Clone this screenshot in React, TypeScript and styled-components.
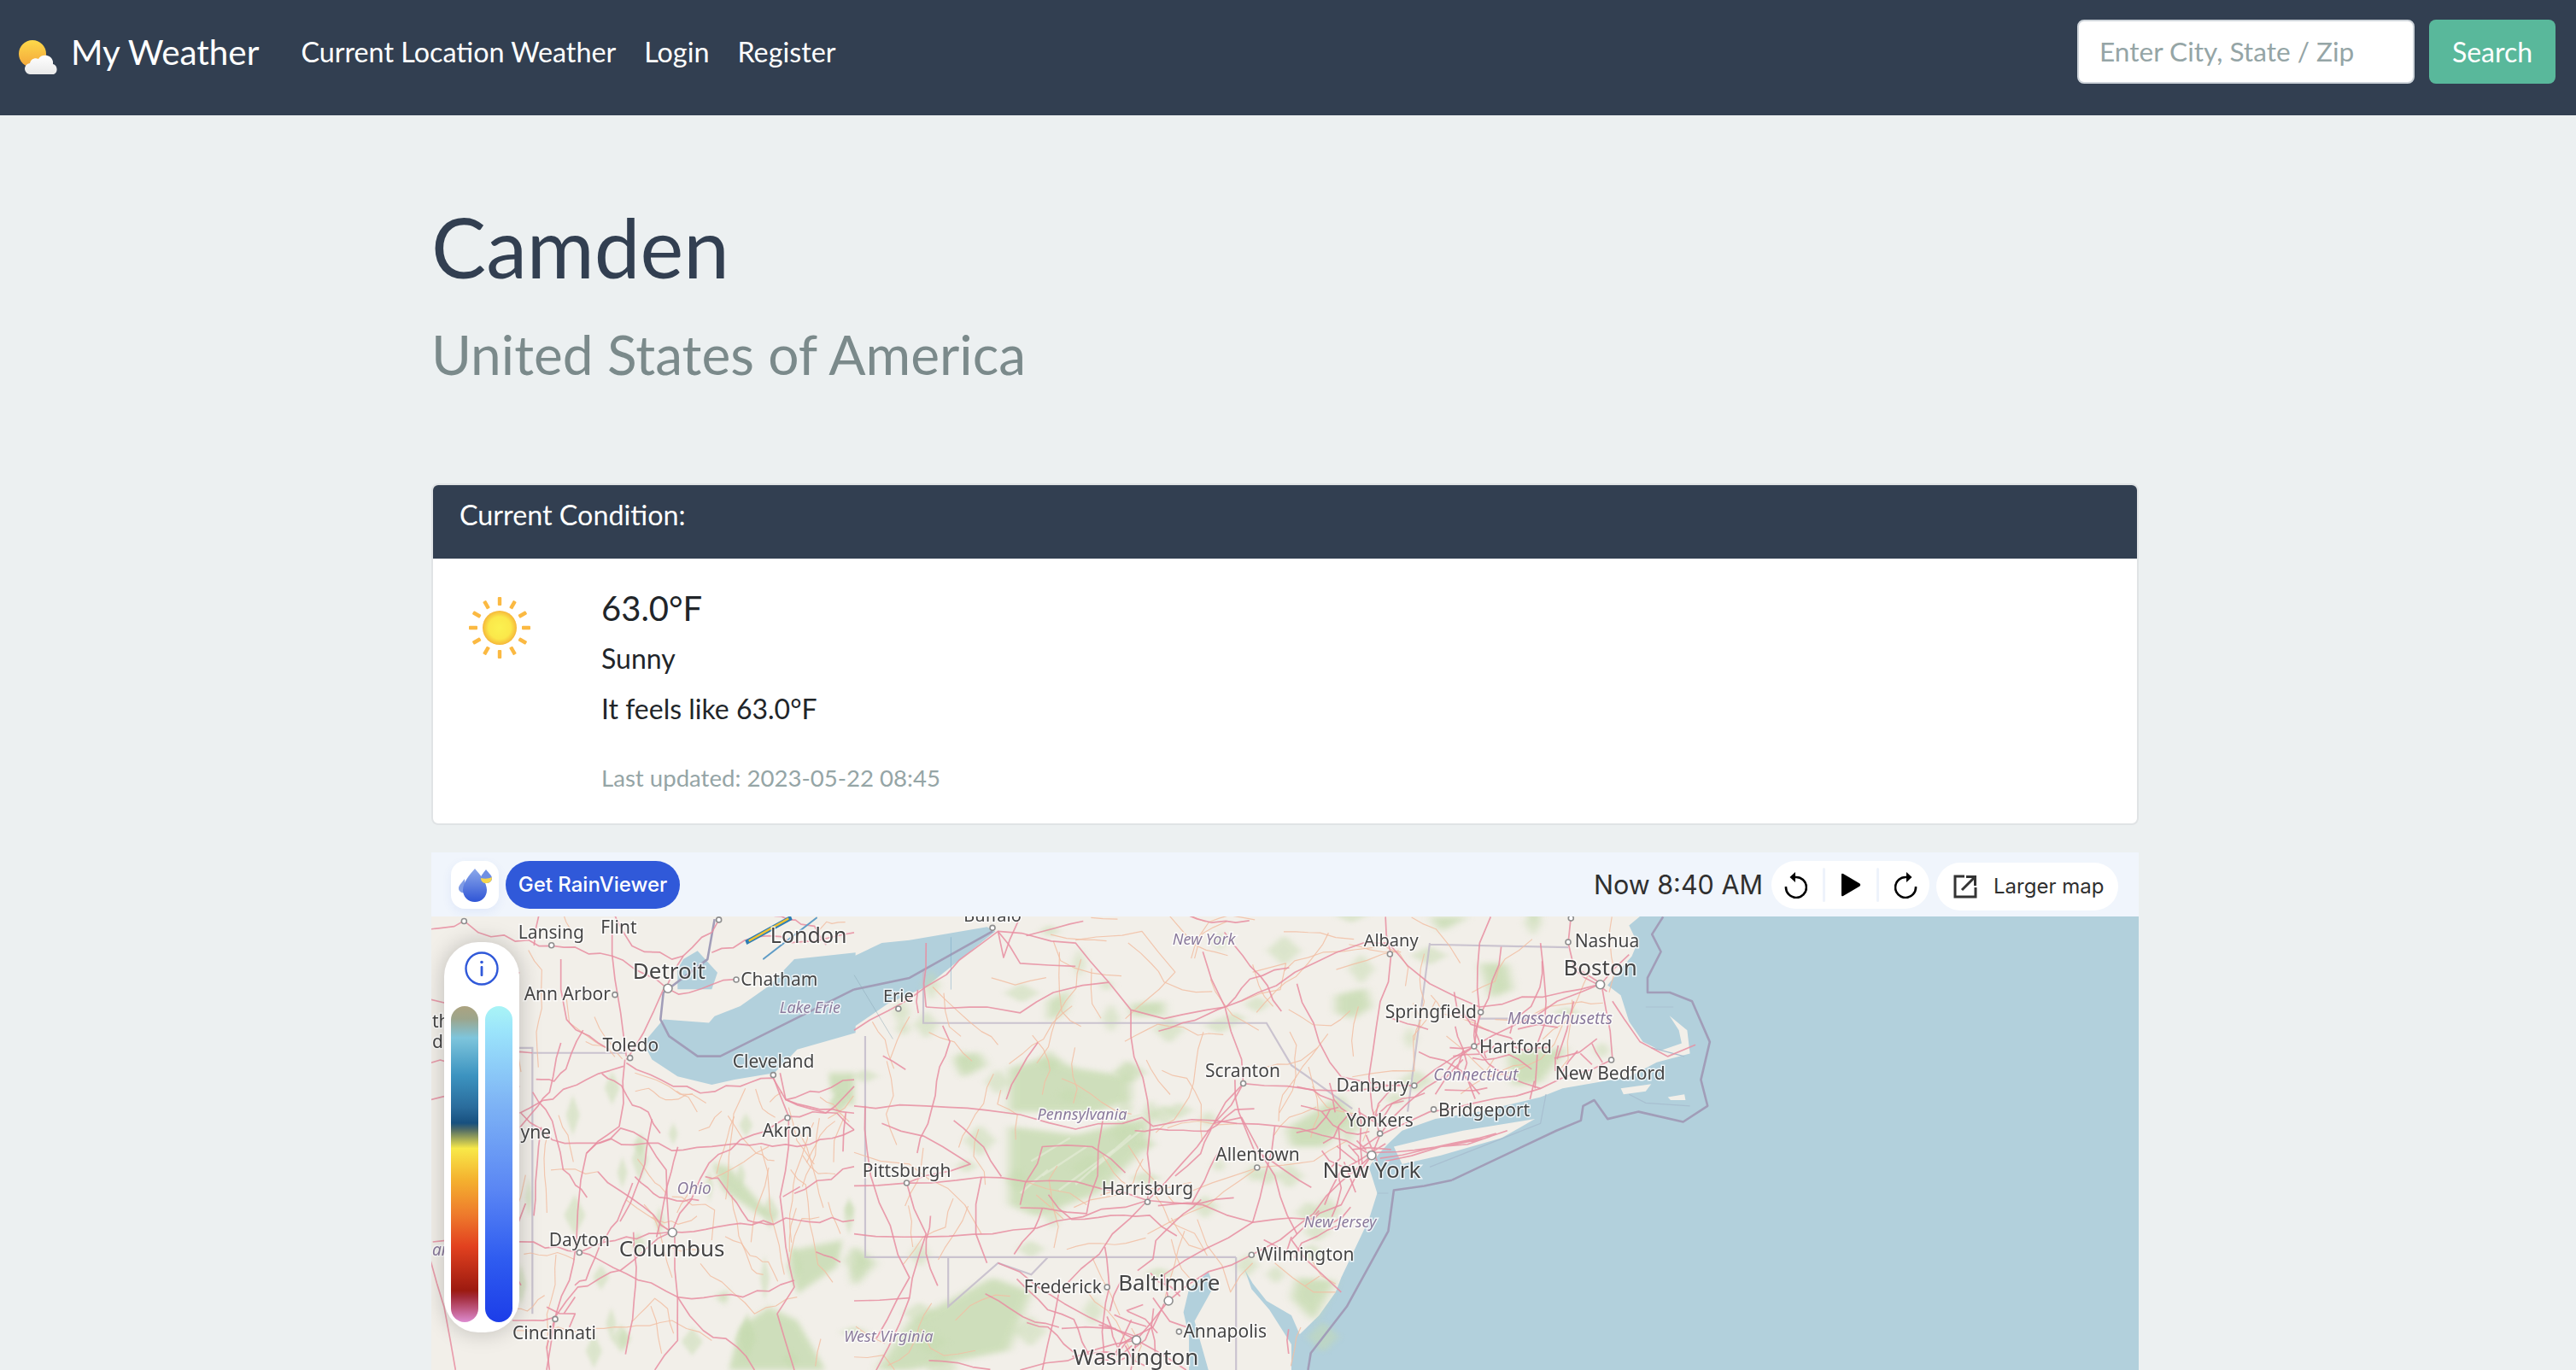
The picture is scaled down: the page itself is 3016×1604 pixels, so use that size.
import React from "react";
import styled, { createGlobalStyle } from "styled-components";

const Global = createGlobalStyle`
  html, body { margin: 0; padding: 0; height: 1604px; overflow: hidden; background: #ecf0f1; }
  body { font-family: Lato, "Liberation Sans", sans-serif; color: #212529; }
  * { box-sizing: border-box; }
`;

const NavBar = styled.nav`
  height: 135px;
  background: #323f51;
  display: flex;
  align-items: center;
  padding: 0 24px 15px 22px;
`;
const Brand = styled.a`
  display: flex;
  align-items: center;
  color: #fff;
  font-size: 40.4px;
  margin-right: 49px;
  gap: 13px;
`;
const NavLinks = styled.div`
  display: flex;
  gap: 33px;
  flex: 1;
`;
const NavLink = styled.a`
  color: #fff;
  font-size: 32.3px;
`;
const SearchForm = styled.form`
  display: flex;
  gap: 17px;
`;
const SearchInput = styled.input`
  width: 395px;
  height: 75px;
  border: 2px solid #ced4da;
  border-radius: 8px;
  background: #fff;
  padding: 0 24px;
  font: 31.6px Lato, sans-serif;
  &::placeholder { color: #95a5a6; opacity: 1; }
`;
const SearchButton = styled.button`
  width: 148px;
  height: 75px;
  padding: 0;
  border: 0;
  border-radius: 8px;
  background: #59b89b;
  color: #fff;
  font: 32px Lato, sans-serif;
`;

const Main = styled.main`
  margin-left: 505px;
  width: 1999px;
`;
const Title = styled.h1`
  margin: 0;
  padding-top: 94px;
  font-weight: 400;
  font-size: 96px;
  line-height: 120px;
  color: #323f51;
`;
const Subtitle = styled.h2`
  margin: 0;
  padding-top: 27px;
  font-weight: 400;
  font-size: 64px;
  line-height: 78px;
  color: #7b8a8b;
`;
const Card = styled.section`
  margin-top: 112px;
  height: 400px;
  background: #fff;
  border: 2px solid #e0e3e5;
  border-radius: 8px;
  overflow: hidden;
`;
const CardHeader = styled.header`
  height: 88px;
  margin: -2px -2px 0;
  background: #323f51;
  color: #fff;
  font-size: 32.3px;
  line-height: 36px;
  padding: 19px 33px 0;
`;
const CardBody = styled.div`
  display: flex;
  padding: 45px 0 0 42px;
`;
const IconCell = styled.div`
  width: 155px;
  flex: none;
`;
const Temp = styled.div`
  font-size: 40px;
  line-height: 48px;
  margin-top: -11px;
`;
const Line = styled.div`
  font-size: 32px;
  line-height: 36px;
  margin-top: 23px;
  &:nth-of-type(2) { margin-top: 17px; }
`;
const Updated = styled.div`
  font-size: 27.6px;
  line-height: 32px;
  margin-top: 47px;
  color: #95a5a6;
`;

const Frame = styled.section`
  margin-top: 32px;
  position: relative;
`;
const FrameBar = styled.div`
  height: 75px;
  background: #f0f5fc;
  display: flex;
  align-items: center;
  padding: 0 24px 0 23px;
  font-family: Inter, sans-serif;
`;
const LogoTile = styled.div`
  width: 56px;
  height: 56px;
  border-radius: 16px;
  background: #fff;
  box-shadow: 0 4px 12px rgba(48, 89, 217, 0.08);
  display: flex;
  align-items: center;
  justify-content: center;
  margin-right: 8px;
`;
const GetButton = styled.a`
  width: 204px;
  height: 56px;
  border-radius: 28px;
  background: #3059d9;
  color: #fff;
  font-size: 24px;
  font-weight: 500;
  display: flex;
  align-items: center;
  justify-content: center;
`;
const Spacer = styled.div`
  flex: 1;
`;
const TimeLabel = styled.span`
  font-size: 30.5px;
  color: #2f2f2f;
  margin-right: 10px;
`;
const Controls = styled.div`
  width: 185px;
  height: 56px;
  border-radius: 28px;
  background: #fff;
  display: flex;
  align-items: center;
  justify-content: space-between;
  padding: 0 13px 0 14px;
  margin-right: 8px;
`;
const Divider = styled.span`
  width: 3px;
  height: 40px;
  border-radius: 2px;
  background: #eef3fb;
`;
const LargerMap = styled.a`
  width: 213px;
  height: 56px;
  margin-top: 4px;
  border-radius: 28px;
  background: #fff;
  color: #2f2f2f;
  font-size: 24px;
  display: flex;
  align-items: center;
  padding-left: 20px;
  gap: 19px;
`;
const MapView = styled.div`
  height: 531px;
  overflow: hidden;
  background: #b2d0dc;
  position: relative;
`;
const MapDrawing = styled.svg`
  display: block;
  width: 1999px;
  height: 531px;
  filter: blur(0.5px);
`;
const Panel = styled.div`
  position: absolute;
  left: 15px;
  top: 30px;
  width: 88px;
  height: 457px;
  border-radius: 40px;
  background: #fff;
  box-shadow: 0 0 26px rgba(0, 0, 0, 0.22);
  display: flex;
  flex-direction: column;
  align-items: center;
`;
const InfoWrap = styled.div`
  height: 75px;
  padding-top: 11px;
`;
const Bars = styled.div`
  display: flex;
  gap: 8px;
`;
const Bar = styled.div<{ $kind: "rain" | "snow" }>`
  width: 32px;
  height: 370px;
  border-radius: 16px;
  background: ${(p) =>
    p.$kind === "rain"
      ? "linear-gradient(180deg,#aca380 0%,#9ca58c 4%,#7ec5dc 10%,#3c93c0 22%,#2a6c9c 32%,#17507f 37%,#4e6a66 39%,#f8e948 45%,#f4b12f 55%,#ee7a2c 66%,#e2411f 76%,#9c1a10 90%,#a22a38 92%,#dd8bd0 100%)"
      : "linear-gradient(180deg,#a9f4f6 0%,#9be4fb 8%,#7fb5f5 30%,#5a86f4 58%,#2f5cf0 80%,#1c3de8 100%)"};
`;

const Land = styled.path`fill: #f2efe9;`;
const Water = styled.path`fill: #b2d0dc;`;
const Forest = styled.path<{ $faint?: boolean }>`
  fill: #c6dbb0;
  opacity: ${(p) => (p.$faint ? 0.5 : 0.8)};
  filter: blur(${(p) => (p.$faint ? 7 : 9)}px);
`;
const Ridge = styled.path`fill: none; stroke: #e4ebd6; stroke-width: 2.5; opacity: 0.7; vector-effect: non-scaling-stroke;`;
const Road = styled.path`fill: none; stroke: #e88fa2; stroke-width: 1.7; opacity: 0.85; vector-effect: non-scaling-stroke; stroke-linejoin: round;`;
const MinorRoad = styled.path`fill: none; stroke: #f2bfa4; stroke-width: 1.2; opacity: 0.85; vector-effect: non-scaling-stroke; stroke-linejoin: round;`;
const Border = styled.path`fill: none; stroke: #c4bccb; stroke-width: 2.2; opacity: 0.85; vector-effect: non-scaling-stroke;`;
const SeaBorder = styled.path`fill: none; stroke: #a19db8; stroke-width: 2.6; vector-effect: non-scaling-stroke; stroke-linejoin: round;`;
const NearShore = styled.path`fill: none; stroke: #a8bfd0; stroke-width: 1.2; vector-effect: non-scaling-stroke;`;
const Place = styled.text<{ $size: number; $state?: boolean }>`
  font-family: "Noto Sans", sans-serif;
  font-size: ${(p) => p.$size}px;
  font-style: ${(p) => (p.$state ? "italic" : "normal")};
  fill: ${(p) => (p.$state ? "#8a7a9c" : "#454545")};
  stroke: rgba(255, 255, 255, 0.75);
  stroke-width: 3px;
  paint-order: stroke;
`;
const Town = styled.circle`
  fill: #fff;
  stroke: #8e8e8e;
  stroke-width: 1.6;
`;

const z4 = (x: number, y: number) => [500 + x / 3, 990 + y / 2.554];
const z6 = (x: number, y: number) => [1000 + x / 1.543, 1070 + y / 2.936];

function makeRng(seed: number) {
  let s = seed;
  return () => {
    s = (s * 16807) % 2147483647;
    return s / 2147483647;
  };
}

// Breaks each straight stretch of a road into small irregular ones.
function wiggle(d: string, seed: number, amp = 5, step = 42) {
  const rnd = makeRng(seed * 97 + 13);
  let out = "";
  let px = 0;
  let py = 0;
  for (const m of d.matchAll(/([ML])\s*(-?\d+)\s+(-?\d+)/g)) {
    const x = +m[2];
    const y = +m[3];
    if (m[1] === "M") {
      out += `M${x} ${y}`;
    } else {
      const n = Math.max(1, Math.round(Math.hypot(x - px, (y - py) * 0.5) / step));
      for (let i = 1; i < n; i++) {
        const t = i / n;
        out += `L${(px + (x - px) * t + (rnd() - 0.5) * amp * 2).toFixed(1)} ${(py + (y - py) * t + (rnd() - 0.5) * amp * 4).toFixed(1)}`;
      }
      out += `L${x} ${y}`;
    }
    px = x;
    py = y;
  }
  return out;
}

function network(
  seed: number,
  count: number,
  box: [number, number, number, number],
  reach: number,
  onLand: (x: number, y: number) => boolean,
) {
  const rnd = makeRng(seed);
  const list: string[] = [];
  let guard = 0;
  while (list.length < count && guard++ < count * 40) {
    let x = box[0] + rnd() * (box[2] - box[0]);
    let y = box[1] + rnd() * (box[3] - box[1]);
    if (!onLand(x, y)) continue;
    let d = `M${x | 0} ${y | 0}`;
    let a = rnd() * Math.PI * 2;
    const legs = 2 + Math.floor(rnd() * 3);
    for (let i = 0; i < legs; i++) {
      a += (rnd() - 0.5) * 1.4;
      const nx = x + Math.cos(a) * reach * (0.5 + rnd());
      const ny = y + Math.sin(a) * reach * 1.8 * (0.5 + rnd());
      if (!onLand(nx, ny)) break;
      d += `L${nx | 0} ${ny | 0}`;
      x = nx;
      y = ny;
    }
    list.push(wiggle(d, seed + list.length, 3, 25));
  }
  return list;
}

function blobs(seed: number, count: number, box: [number, number, number, number], size: number, onLand: (x: number, y: number) => boolean) {
  const rnd = makeRng(seed);
  const list: string[] = [];
  let guard = 0;
  while (list.length < count && guard++ < count * 40) {
    const x = box[0] + rnd() * (box[2] - box[0]);
    const y = box[1] + rnd() * (box[3] - box[1]);
    if (!onLand(x, y)) continue;
    const w = size * (0.5 + rnd());
    const h = size * 1.8 * (0.5 + rnd());
    list.push(`M${x | 0} ${(y - h) | 0} L${(x + w) | 0} ${y | 0} L${x | 0} ${(y + h) | 0} L${(x - w) | 0} ${y | 0} Z`);
  }
  return list;
}

const land6 = (x: number, y: number) => {
  if (y < 0 || y > 1568 || x < 0) return false;
  if (x < 270 && y < 400 - x * 1.25) return false;
  if (y < 560) return x < 1380;
  if (y < 640) return x < 1240;
  if (y < 730) return x < 1030;
  if (y < 830) return x < 960;
  if (y > 1330 && x > 560 && x < 660) return false;
  if (y > 1250 && x > 700 && x < 770) return false;
  return x < 925 - (y - 830) * 0.12;
};
const land4 = (x: number, y: number) => {
  if (y < 0 || y > 1568) return false;
  if (x > 330 && x < 1500 && y > 310 && y < 720 && x > 760) return false;
  return x > 330 || y < 100 ? x < 1500 : true;
};

type Lbl = [string, number, number, number, boolean?, ("end" | "middle" | "start")?];

const labels4: Lbl[] = [
  ["Lansing", 436, 278, 21],
  ["Flint", 673, 262, 21],
  ["London", 1340, 290, 25],
  ["Detroit", 850, 398, 26],
  ["Chatham", 1237, 420, 21],
  ["Ann Arbor", 493, 462, 21],
  ["Lake Erie", 1345, 500, 18, true],
  ["Toledo", 715, 615, 21],
  ["Cleveland", 1217, 665, 21],
  ["Akron", 1265, 870, 21],
  ["yne", 435, 875, 21, false, "end"],
  ["Ohio", 938, 1043, 19, true],
  ["Dayton", 535, 1197, 21],
  ["Columbus", 860, 1228, 26],
  ["Cincinnati", 447, 1475, 21],
  ["an", 18, 1225, 19, true, "start"],
  ["th", 18, 545, 21, false, "start"],
  ["d", 18, 605, 21, false, "start"],
];
const labels6: Lbl[] = [
  ["Buffalo", 250, 25, 20],
  ["New York", 632, 105, 18, true],
  ["Albany", 970, 112, 20],
  ["Nashua", 1360, 115, 21],
  ["Boston", 1348, 212, 26],
  ["Erie", 80, 302, 20],
  ["Springfield", 1042, 358, 21],
  ["Massachusetts", 1275, 378, 19, true],
  ["Hartford", 1195, 480, 21],
  ["Scranton", 702, 560, 21],
  ["Connecticut", 1123, 573, 19, true],
  ["New Bedford", 1366, 570, 21],
  ["Danbury", 937, 612, 21],
  ["Pennsylvania", 412, 707, 18, true],
  ["Bridgeport", 1138, 695, 21],
  ["Yonkers", 950, 730, 21],
  ["Allentown", 729, 848, 21],
  ["New York", 935, 908, 26],
  ["Pittsburgh", 95, 905, 21],
  ["Harrisburg", 530, 965, 21],
  ["New Jersey", 878, 1077, 18, true],
  ["Wilmington", 815, 1192, 21],
  ["Frederick", 377, 1305, 21],
  ["Baltimore", 569, 1295, 26],
  ["Annapolis", 670, 1455, 21],
  ["West Virginia", 62, 1470, 18, true],
  ["Washington", 509, 1550, 26],
];
const towns6: [number, number, number][] = [
  [250, 48, 3], [968, 138, 3], [1290, 97, 3], [1348, 243, 5], [80, 326, 3], [1132, 338, 3],
  [1120, 455, 3], [703, 583, 3], [1012, 590, 3], [1368, 502, 3], [1047, 672, 3], [950, 755, 3],
  [935, 830, 5], [728, 872, 3], [95, 925, 3], [530, 990, 3], [718, 1172, 3], [457, 1283, 3],
  [568, 1330, 5], [587, 1436, 3], [510, 1465, 5], [1295, 15, 3],
];
const towns4: [number, number, number][] = [
  [130, 226, 3], [437, 298, 3], [846, 427, 5], [1086, 401, 3], [660, 446, 3], [713, 635, 3],
  [1216, 686, 3], [1266, 814, 3], [862, 1157, 5], [535, 1217, 3], [450, 1416, 3], [1025, 222, 3],
];

const roads4 = [
  "M695 640 L690 770 L675 840 L560 920 L540 1000 L525 1180 L500 1300 L450 1410 L420 1568",
  "M12 650 L130 640 L370 620 M700 650 L820 700 L960 740 L1100 720 L1215 695 L1260 760 L1500 800",
  "M700 640 L760 560 L830 430 L840 425",
  "M12 250 L130 225 L180 260 L440 300 L650 330 L730 370 L840 425",
  "M840 425 L900 330 L1000 260 L1025 222",
  "M650 260 L660 400 L680 500 L700 630",
  "M1215 690 L1270 810 L1270 900 L1240 1050 L1260 1200 L1290 1320 L1230 1400 L1290 1568",
  "M860 1155 L1100 1130 L1300 1120 L1500 1120",
  "M860 1155 L700 1170 L540 1215 L330 1185 L20 1185",
  "M860 1155 L990 950 L1100 880 L1270 810",
  "M860 1155 L680 1270 L530 1320 L450 1410",
  "M870 1170 L880 1350 L970 1450 L1090 1500 L1150 1568",
  "M330 800 L440 880 L770 890 L900 910 L1000 900 L1300 900 L1500 850",
  "M560 920 L680 845 L770 880 L840 970 L850 1150",
  "M535 1215 L700 1280 L880 1350 L1110 1350 L1290 1300",
  "M600 975 L760 1080 L860 1155",
  "M325 800 L560 700 L690 660",
  "M1000 320 L1200 270 L1280 290 L1500 260",
  "M1086 400 L920 440 L850 430",
  "M430 1568 L420 1500 L450 1410 L300 1420",
  "M1240 680 L1260 760 L1500 700 M1260 760 L1440 800 L1500 850",
  "M660 210 L720 300 L860 340 L900 330",
  "M320 1185 L100 1200 M12 1240 L60 1380 L100 1568",
  "M470 340 L470 430 L490 520 L640 610",
  "M1290 1040 L1500 960 M1250 1050 L1310 1020",
  "M800 1568 L880 1480 L880 1350",
  "M12 460 L60 470 L325 380 M12 760 L60 750 L325 720",
  "M480 1400 L520 1350 M420 1380 L520 1400 L500 1440",
  "M1270 810 L1400 800 L1500 720",
];
const minor4 = [
  "M490 460 L500 530 L640 610",
  "M435 970 L600 975 M990 1000 L1200 900",
  "M860 1050 L1010 1090 L1000 1180 M700 1060 L860 1160",
  "M960 1250 L1150 1400 L1300 1350",
  "M300 1450 L700 1440 L860 1420 L1000 1480",
  "M730 680 L850 720 L980 770",
];
const roads6 = [
  "M0 400 L130 250 L260 60 L270 150 L300 10",
  "M970 100 L920 100 L830 170 L730 270 L670 320 L560 360 L500 330 L460 235 L360 270 L300 340 L240 320 L130 320",
  "M260 60 L400 100 L460 235 M630 130 L670 320",
  "M0 660 L130 660 L240 675 L300 690 L400 740 L520 700 L540 730 L650 710 L770 730 L890 780 L935 830",
  "M0 935 L95 925 L230 905 L310 920 L400 920 L530 985 L630 1000 L720 1060 L830 1050",
  "M500 330 L500 420 L530 640 L535 730 L530 985",
  "M670 320 L700 500 L703 583 L650 720 L620 800 L530 985 L410 1220 L370 1300",
  "M935 830 L880 920 L830 1030 L770 1120 L718 1172 L640 1230 L568 1330 L510 1465",
  "M935 830 L950 760 L1040 680 L1240 600 L1370 500 L1350 240",
  "M950 760 L1000 650 L1120 455 L1270 300 L1350 240",
  "M1120 455 L1130 340 L1130 100 L1150 10",
  "M950 760 L930 560 L970 140 L960 10",
  "M970 110 L1040 240 L1130 320 L1280 270 L1350 240",
  "M703 583 L830 605 L1012 590 L1120 455",
  "M1350 240 L1300 180 L1290 100 L1295 10",
  "M1370 300 L1420 440 L1470 490 L1520 450",
  "M0 1100 L130 1110 L250 1100 L330 1080 L530 985",
  "M20 660 L30 900 L100 1250 L40 1460",
  "M510 1465 L380 1340 L330 1280 L260 1200",
  "M510 1465 L600 1568 M510 1465 L300 1568 M510 1465 L500 1568",
  "M950 840 L1130 770 L1160 755 M960 850 L1060 800 L1150 765 M940 820 L1090 790 L1180 745",
  "M95 925 L130 1100 L100 1320 L40 1568",
  "M95 925 L210 860 L160 800 L50 720",
  "M300 1000 L340 800 L430 800 L490 890",
  "M790 1120 L880 1300 M935 830 L880 1000 L840 1030 L830 1050",
  "M1350 240 L1400 140 M1240 100 L1250 300 L1230 600",
  "M800 240 L840 440 L880 560 L1012 590",
  "M700 590 L650 720 L700 700 L760 900 L800 1100",
  "M1120 455 L1180 560 L1240 600 M1300 300 L1270 500",
  "M100 1320 L0 1330 M370 1300 L340 1568",
  "M568 1330 L560 1240 L720 1060 L760 730",
  "M920 800 L950 760 M910 850 L960 790 M925 760 L945 850 M900 810 L970 810",
  "M850 1000 L880 880 L910 850 M790 1120 L840 1020",
  "M540 1320 L570 1400 L600 1420 M480 1480 L540 1420 L560 1340",
  "M1100 470 L1090 530 L1130 620 M1100 500 L1050 620",
  "M130 320 L130 100 M260 60 L300 170 L400 180",
  "M780 1170 L790 1110 M770 1150 L740 1120",
  "M450 700 L440 900 L420 1030 L300 1010 M230 905 L220 1100 L240 1200",
];
const minor6 = [
  "M400 90 L520 60 L580 200 L490 360",
  "M720 200 L780 170 L770 260 L700 300",
  "M0 820 L100 860 L200 1000 L230 1100",
  "M310 920 L390 960 L420 1000 M530 1100 L640 1000 L730 872",
  "M890 780 L830 850 L730 872 L600 960",
  "M900 560 L1012 540 L1010 420 L1050 300",
  "M1070 420 L1150 560 L1240 500 L1280 380",
  "M620 1050 L680 1300 L720 1200 M430 1180 L480 1380",
  "M760 1200 L830 1300 L870 1300",
];
const green6 = [
  "M280 530 L350 490 L400 530 L500 560 L500 640 L440 680 L280 680 Z",
  "M280 730 L400 760 L530 700 L530 800 L440 960 L330 1040 L280 1000 Z",
  "M180 490 L225 475 L240 520 L200 560 Z",
  "M870 280 L925 255 L935 320 L900 360 L870 340 Z",
  "M350 300 L390 260 L380 340 L350 370 Z M500 310 L560 300 L560 350 L500 350 Z",
  "M780 740 L880 620 L900 700 L850 800 L790 800 Z",
  "M100 1400 L250 1250 L320 1300 L280 1500 L100 1568 L40 1568 Z",
  "M0 1140 L40 1200 L0 1280 Z M1130 170 L1180 170 L1190 260 L1150 290 Z",
  "M1040 10 L1110 10 L1060 60 Z M1180 480 L1290 460 L1240 580 L1190 590 Z",
  "M800 1250 L870 1260 L830 1400 L790 1320 Z",
];
const green4 = [
  "M1000 950 L1060 960 L1180 1080 L1240 1120 L1160 1100 L1040 1030 Z",
  "M1280 1210 L1460 1180 L1440 1260 L1300 1340 Z",
  "M1100 1440 L1200 1380 L1300 1420 L1400 1568 L1060 1568 Z",
  "M1410 680 L1500 680 L1500 780 L1420 740 Z",
  "M1010 1350 L1060 1330 L1050 1370 Z",
];
const ridges6 = [
  "M340 900 L420 800", "M370 950 L470 810", "M400 930 L500 760", "M320 850 L390 770",
  "M430 880 L520 740", "M300 960 L350 880", "M440 720 L520 690",
];

const pink6 = [
  ...network(11, 34, [0, 0, 1380, 1568], 60, land6),
  ...network(23, 22, [860, 660, 1000, 1100], 28, land6),
  ...network(37, 14, [440, 1300, 620, 1568], 30, land6),
  ...network(41, 18, [1020, 380, 1370, 620], 34, land6),
];
const peach6 = network(53, 90, [0, 0, 1380, 1568], 48, land6);
const pink4 = network(67, 22, [330, 220, 1500, 1568], 70, land4);
const peach4 = network(71, 50, [330, 220, 1500, 1568], 55, land4);
const spots6 = blobs(83, 70, [0, 0, 1380, 1568], 22, land6);
const spots4 = blobs(89, 30, [330, 700, 1500, 1568], 26, land4);

const z4T = "translate(500 990) scale(0.33333 0.39154)";
const z6T = "translate(1000 1070) scale(0.64809 0.34060)";
const z7T = "translate(1700 1070) scale(0.52040 0.34060)";

function Labels({ items, at }: { items: Lbl[]; at: (x: number, y: number) => number[] }) {
  return (
    <>
      {items.map(([t, x, y, s, st, anchor], i) => {
        const [ax, ay] = at(x, y);
        return (
          <Place key={i} x={ax} y={ay} $size={s} $state={st} textAnchor={anchor ?? "middle"}>
            {t}
          </Place>
        );
      })}
    </>
  );
}

function Towns({ items, at }: { items: [number, number, number][]; at: (x: number, y: number) => number[] }) {
  return (
    <>
      {items.map(([x, y, r], i) => {
        const [ax, ay] = at(x, y);
        return <Town key={i} cx={ax} cy={ay} r={r} />;
      })}
    </>
  );
}

function Map() {
  return (
    <MapDrawing viewBox="505 1073 1999 531">
      <g transform={z6T}>
        <Land d="M1425 0 L1400 40 L1415 100 L1405 145 L1385 190 L1361 245 L1385 280 L1400 370 L1425 440 L1457 470 L1495 445 L1490 400 L1473 350 L1505 400 L1510 480 L1450 510 L1400 560 L1340 580 L1280 600 L1240 630 L1130 680 L1050 705 L990 745 L965 790 L950 820 L930 870 L945 960 L930 1050 L905 1150 L880 1250 L870 1300 L840 1380 L805 1445 L790 1380 L745 1330 L720 1270 L705 1220 L718 1290 L750 1360 L790 1480 L790 1568 L-800 1568 L-800 0 Z" />
        <Land d="M975 800 L1040 770 L1100 745 L1230 705 L1170 770 L1060 830 L990 860 Z" />
        <Land d="M1385 600 L1440 585 L1430 610 L1390 620 Z M1470 630 L1500 620 L1502 640 L1475 640 Z" />
        <Water d="M640 1230 L605 1290 L595 1370 L605 1450 L605 1568 L640 1568 L630 1500 L615 1400 L650 1280 Z" />
        <Water d="M-5 150 L50 100 L100 90 L240 45 L255 60 L130 250 L60 310 L-5 395 Z" />
        {green6.map((d, i) => <Forest key={i} d={d} />)}
        {spots6.map((d, i) => <Forest key={i} d={d} $faint />)}
        {ridges6.map((d, i) => <Ridge key={i} d={d} />)}
      </g>
      <g transform={z4T}>
        <Water d="M760 590 L830 520 L990 530 L1010 510 L1100 480 L1200 420 L1290 340 L1505 320 L1505 560 L1300 610 L1220 680 L1080 700 L1000 715 L880 690 L790 640 Z" />
        <Water d="M880 370 L900 340 L950 315 L1020 380 L1000 430 L880 430 Z" />
        {green4.map((d, i) => <Forest key={i} d={d} />)}
        {spots4.map((d, i) => <Forest key={i} d={d} $faint />)}
        <Border d="M370 1400 L370 605 L320 605 M370 620 L700 620" />
        <SeaBorder d="M1010 220 L985 340 L830 440 L820 520 L850 570 L950 630 L1030 630 L1500 430" />
        {peach4.map((d, i) => <MinorRoad key={i} d={d} />)}
        {minor4.map((d, i) => <MinorRoad key={i} d={wiggle(d, i + 200)} />)}
        {pink4.map((d, i) => <Road key={i} d={d} />)}
        {roads4.map((d, i) => <Road key={i} d={wiggle(d, i + 1)} />)}
        <path d="M1120 290 L1280 215" stroke="#2e7db4" strokeWidth="14" fill="none" />
        <path d="M1130 285 L1270 218" stroke="#f2c230" strokeWidth="6" fill="none" />
        <path d="M1180 340 L1370 215" stroke="#5f9cc6" strokeWidth="5" fill="none" />
      </g>
      <g transform={z6T}>
        <Border d="M125 190 L125 375 L745 375 L790 520 L835 580 L900 670 M20 420 L20 1180 L690 1180 M1040 105 L1290 115 M1000 680 L1040 100 M1130 360 L1240 360 M170 1180 L170 1350 L260 1200 L320 1240 L350 1180 M690 1180 L690 1568" />
        <SeaBorder d="M0 260 L100 220 L250 60" />
        <SeaBorder d="M1080 915 L1030 935 L975 950 L965 1090 L890 1350 L825 1510 L820 1568" />
        <NearShore d="M945 960 L965 960 M1040 870 L1240 720 L1250 620 M1430 320 L1480 320 M1440 460 L1500 490 M1400 620 L1430 650 L1510 660" />
        {peach6.map((d, i) => <MinorRoad key={i} d={d} />)}
        {minor6.map((d, i) => <MinorRoad key={i} d={wiggle(d, i + 300)} />)}
        {pink6.map((d, i) => <Road key={i} d={d} />)}
        {roads6.map((d, i) => <Road key={i} d={wiggle(d, i + 100)} />)}
        <path d="M175 80 L175 260" stroke="#6ea3c4" strokeWidth="1" fill="none" />
        <path d="M0 210 L70 430" stroke="#8ba7b5" strokeWidth="1" fill="none" />
      </g>
      <g transform={z7T}>
        <SeaBorder d="M475 10 L450 70 L470 130 L440 220 L440 270 L490 270 L540 300 L580 440 L560 570 L575 660 L520 715 L420 680 L350 705 L320 640 L295 660 L290 710 L235 745 L0 915" />
      </g>
      <Towns items={towns4} at={z4} />
      <Towns items={towns6} at={z6} />
      <Labels items={labels4} at={z4} />
      <Labels items={labels6} at={z6} />
    </MapDrawing>
  );
}

const BrandIcon = () => (
  <svg width="48" height="54" viewBox="22 28 48 54">
    <defs>
      <linearGradient id="sunG" x1="0" y1="0" x2="0" y2="1">
        <stop offset="0" stopColor="#fdd94a" />
        <stop offset="1" stopColor="#f3a53a" />
      </linearGradient>
      <linearGradient id="cloudG" x1="0" y1="0" x2="0" y2="1">
        <stop offset="0" stopColor="#fff" />
        <stop offset="1" stopColor="#e9e9e9" />
      </linearGradient>
    </defs>
    <circle cx="38" cy="58" r="16" fill="url(#sunG)" />
    <path
      d="M36 82 a6.5 6.5 0 0 1 -1 -13 c1 -5 6 -7 10 -5 c3 -6 15 -6 17 3 c0 1 0 2 0 3 a6.5 6.5 0 0 1 1 12 Z"
      fill="url(#cloudG)"
    />
  </svg>
);

const SunIcon = () => (
  <svg width="72" height="72" viewBox="-36 -36 72 72">
    <defs>
      <radialGradient id="sunCore">
        <stop offset="0" stopColor="#fbf150" />
        <stop offset="0.65" stopColor="#fbe84a" />
        <stop offset="1" stopColor="#f6b73a" />
      </radialGradient>
    </defs>
    <circle r="20" fill="url(#sunCore)" />
    {Array.from({ length: 12 }, (_, i) => (
      <rect key={i} x="-2.2" y="-36" width="4.4" height="10" rx="1" fill="#fbb942" transform={`rotate(${i * 30})`} />
    ))}
  </svg>
);

const DropIcon = () => (
  <svg width="42" height="42" viewBox="0 0 42 42">
    <defs>
      <linearGradient id="dropG" x1="0" y1="0" x2="0" y2="1">
        <stop offset="0" stopColor="#8da9ea" />
        <stop offset="1" stopColor="#2f55d6" />
      </linearGradient>
    </defs>
    <path d="M9 14 C5 19 2 22 2 25 C2 29 6 31 10 30 Z" fill="#7f9ce6" />
    <path d="M21 2 C15 9 7 18 7 27 C7 35 13 41 21 41 C29 41 35 35 35 27 C35 18 27 9 21 2 Z" fill="url(#dropG)" />
    <path d="M34 3 C31 7 28 10 28 13 C28 17 31 19 34 19 C38 19 41 17 41 13 C41 10 37 7 34 3 Z" fill="#6f8fe4" />
    <path d="M28 13 C28 17 31 19 34 19 C38 19 41 17 41 12 C37 14 32 14 28 13 Z" fill="#f6d64e" />
  </svg>
);

const InfoIcon = () => (
  <svg width="40" height="40" viewBox="0 0 40 40">
    <circle cx="20" cy="20" r="18.5" fill="none" stroke="#3059d9" strokeWidth="2.4" />
    <circle cx="20" cy="12.5" r="1.8" fill="#3059d9" />
    <rect x="18.6" y="17" width="2.8" height="12" rx="1" fill="#3059d9" />
  </svg>
);

const TurnIcon = styled.svg<{ $flip?: boolean }>`
  width: 28px;
  height: 32px;
  transform: ${(p) => (p.$flip ? "scaleX(-1)" : "none")};
`;

const RewindIcon = ({ flip }: { flip?: boolean }) => (
  <TurnIcon viewBox="0 0 28 32" $flip={flip}>
    <path d="M14 7 A12 12 0 1 1 3 18" fill="none" stroke="#000" strokeWidth="2.6" />
    <path d="M14 1 L14 13 L7.5 7 Z" fill="#000" />
  </TurnIcon>
);

const PlayIcon = () => (
  <svg width="24" height="28" viewBox="0 0 24 28">
    <path d="M1 2 Q1 0 3 1 L22.5 12.5 Q24 14 22.5 15.5 L3 27 Q1 28 1 26 Z" fill="#000" />
  </svg>
);

const ExternalIcon = () => (
  <svg width="28" height="28" viewBox="0 0 28 28" fill="none" stroke="#333" strokeWidth="3">
    <path d="M13 2 H2 V26 H26 V15" />
    <path d="M10 18 L25 3 M15 2.5 H25.5 V13" />
  </svg>
);

export default function App() {
  return (
    <>
      <Global />
      <NavBar>
        <Brand>
          <BrandIcon />
          My Weather
        </Brand>
        <NavLinks>
          <NavLink>Current Location Weather</NavLink>
          <NavLink>Login</NavLink>
          <NavLink>Register</NavLink>
        </NavLinks>
        <SearchForm>
          <SearchInput placeholder="Enter City, State / Zip" />
          <SearchButton type="button">Search</SearchButton>
        </SearchForm>
      </NavBar>
      <Main>
        <Title>Camden</Title>
        <Subtitle>United States of America</Subtitle>
        <Card>
          <CardHeader>Current Condition:</CardHeader>
          <CardBody>
            <IconCell>
              <SunIcon />
            </IconCell>
            <div>
              <Temp>63.0°F</Temp>
              <Line>Sunny</Line>
              <Line>It feels like 63.0°F</Line>
              <Updated>Last updated: 2023-05-22 08:45</Updated>
            </div>
          </CardBody>
        </Card>
        <Frame>
          <FrameBar>
            <LogoTile>
              <DropIcon />
            </LogoTile>
            <GetButton>Get RainViewer</GetButton>
            <Spacer />
            <TimeLabel>Now 8:40 AM</TimeLabel>
            <Controls>
              <RewindIcon />
              <Divider />
              <PlayIcon />
              <Divider />
              <RewindIcon flip />
            </Controls>
            <LargerMap>
              <ExternalIcon />
              Larger map
            </LargerMap>
          </FrameBar>
          <MapView>
            <Map />
            <Panel>
              <InfoWrap>
                <InfoIcon />
              </InfoWrap>
              <Bars>
                <Bar $kind="rain" />
                <Bar $kind="snow" />
              </Bars>
            </Panel>
          </MapView>
        </Frame>
      </Main>
    </>
  );
}
